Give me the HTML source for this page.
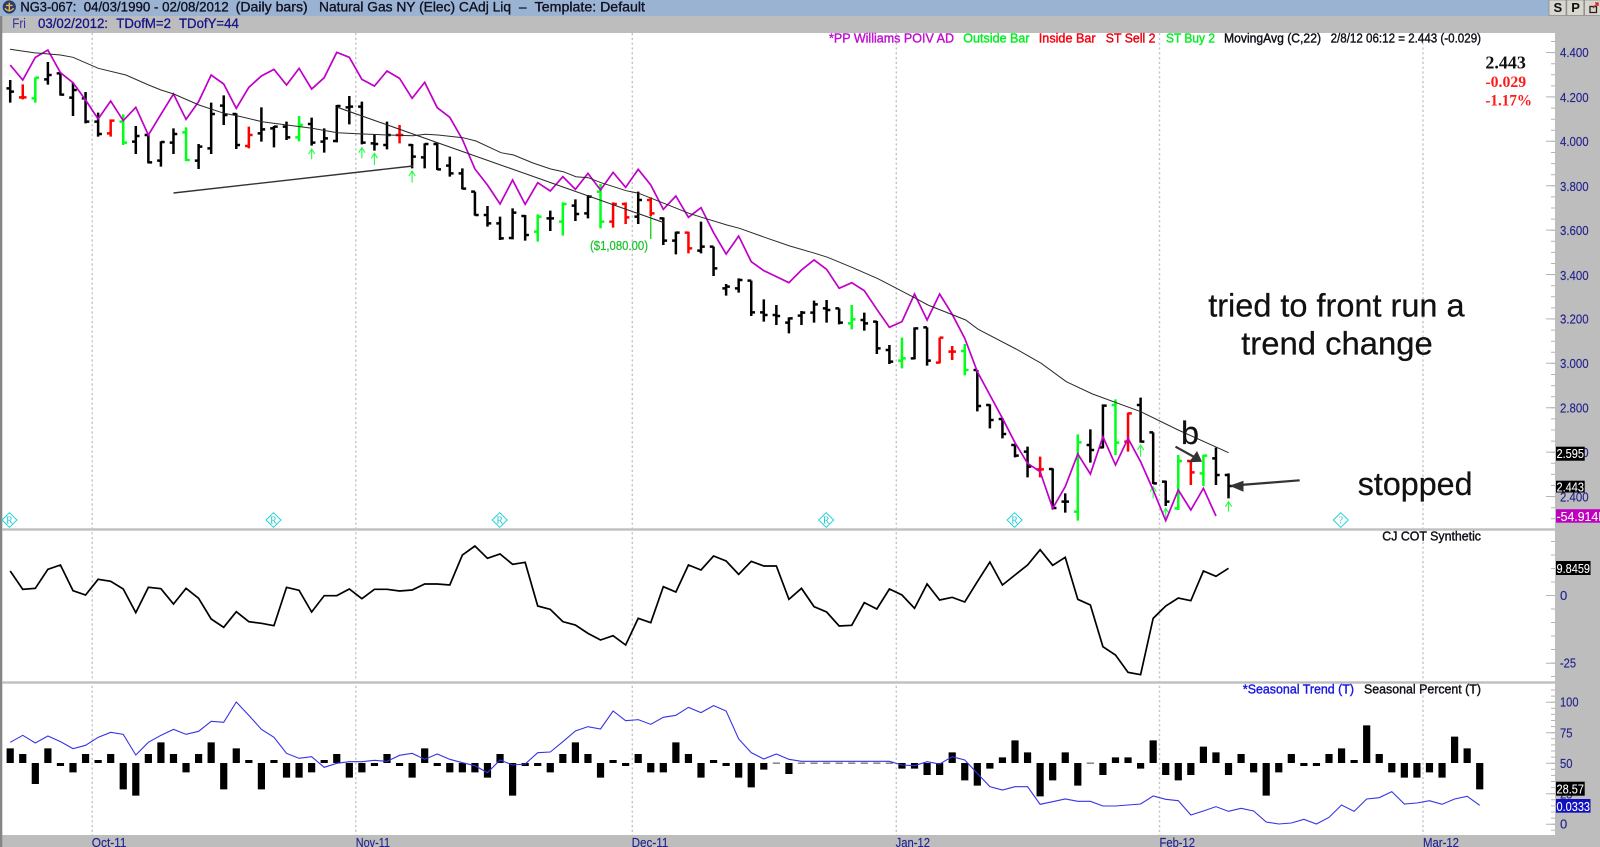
<!DOCTYPE html>
<html><head><meta charset="utf-8"><title>NG3-067</title>
<style>
html,body{margin:0;padding:0;background:#fff;width:1600px;height:847px;overflow:hidden}
svg{display:block;filter:blur(.25px)}
.n path,.n polyline{vector-effect:non-scaling-stroke;fill:none}
text{font-family:"Liberation Sans",Arial,sans-serif}
.t{font-size:14px;fill:#101020;stroke:#101020;stroke-width:.35}
.i{font-size:13.5px;fill:#14148c;stroke:#14148c;stroke-width:.3}
.a{font-size:13px;fill:#24248c;stroke:#24248c;stroke-width:.15}
.l{font-size:13px;stroke-width:.4}
.b{font-size:13px;fill:#fff;stroke:#fff;stroke-width:.1}
.p{font-family:"Liberation Serif",serif;font-weight:bold}
.c{font-size:32.3px;fill:#111;stroke:#111;stroke-width:.25}
</style></head><body>
<svg width="1600" height="847" viewBox="0 0 1600 847" xmlns="http://www.w3.org/2000/svg">
<rect width="1600" height="847" fill="#fff"/>
<rect x="0" y="0" width="1600" height="16" fill="#9ab3d2"/>
<rect x="0" y="16" width="1600" height="17" fill="#bdbdbd"/>
<rect x="1555" y="33" width="45" height="814" fill="#bdbdbd"/>
<rect x="0" y="835" width="1600" height="12" fill="#bdbdbd"/>
<rect x="0" y="16" width="2.3" height="831" fill="#858585"/>
<rect x="2" y="528.3" width="1553" height="2.4" fill="#bfbfbf"/>
<rect x="2" y="681.3" width="1553" height="2.4" fill="#bfbfbf"/>

<!-- dotted month lines -->
<g stroke="#c4c4c4" stroke-width="1.4" stroke-dasharray="2.2 2.6">
<path d="M92.2 33V835M355.8 33V835M632.3 33V835M896.3 33V835M1159.5 33V835M1423 33V835"/>
</g>

<!-- axis ticks -->
<g fill="none" stroke="#b4b4b4" stroke-width="1">
<path stroke-width="4" stroke-dasharray="1 10.1" d="M1553 41V528"/>
<path stroke-width="9" stroke-dasharray="1 43.4" d="M1550.5 52V528"/>
<path stroke-width="4" stroke-dasharray="1 12.5" d="M1553 541V681"/>
<path stroke-width="9" stroke-dasharray="1 66.7" d="M1550.5 595V681"/>
<path stroke-width="4" stroke-dasharray="1 5.1" d="M1553 689.5V835"/>
<path stroke-width="9" stroke-dasharray="1 29.5" d="M1550.5 701.7V835"/>
</g>

<!-- title bar -->
<circle cx="9.3" cy="7" r="6.6" fill="#2e3a68"/>
<path d="M9.3 2.6V11.8M6 5.4H12.6M5.2 8C5.8 11.4 12.8 11.4 13.4 8" fill="none" stroke="#e0bc50" stroke-width="1.4"/>
<text class="t" x="20.4" y="11.5" textLength="56" lengthAdjust="spacingAndGlyphs">NG3-067:</text>
<text class="t" x="83.7" y="11.5" textLength="145" lengthAdjust="spacingAndGlyphs">04/03/1990 - 02/08/2012</text>
<text class="t" x="235.7" y="11.5" textLength="72" lengthAdjust="spacingAndGlyphs">(Daily bars)</text>
<text class="t" x="319" y="11.5" textLength="192" lengthAdjust="spacingAndGlyphs">Natural Gas NY (Elec) CAdj Liq</text>
<text class="t" x="519" y="11.5" textLength="7.5" lengthAdjust="spacingAndGlyphs">—</text>
<text class="t" x="534.7" y="11.5" textLength="110.3" lengthAdjust="spacingAndGlyphs">Template: Default</text>

<!-- top right buttons -->
<g>
<rect x="1549" y="0" width="17" height="15.5" fill="#d9d6ce" stroke="#8f8f8f" stroke-width=".8"/>
<rect x="1566.8" y="0" width="17" height="15.5" fill="#d9d6ce" stroke="#8f8f8f" stroke-width=".8"/>
<rect x="1584.6" y="0" width="16" height="15.5" fill="#d9d6ce" stroke="#8f8f8f" stroke-width=".8"/>
<text x="1553.5" y="12" font-size="13" font-weight="bold" fill="#111">S</text>
<text x="1571.2" y="12" font-size="13" font-weight="bold" fill="#111">P</text>
<rect x="1590" y="6.5" width="6.5" height="6" fill="none" stroke="#222" stroke-width="1.3"/>
<path d="M1593 8L1597.5 3.5M1595 3H1598V6" fill="none" stroke="#d02020" stroke-width="1.3"/>
</g>

<!-- info row -->
<text class="i" x="12.2" y="28" textLength="13.7" lengthAdjust="spacingAndGlyphs" style="fill:#33339a;stroke:none">Fri</text>
<text class="i" x="38" y="28" textLength="70" lengthAdjust="spacingAndGlyphs">03/02/2012:</text>
<text class="i" x="116.3" y="28" textLength="54.7" lengthAdjust="spacingAndGlyphs">TDofM=2</text>
<text class="i" x="179" y="28" textLength="59.8" lengthAdjust="spacingAndGlyphs">TDofY=44</text>

<!-- price bars and main lines: x in bar index, y in 3x pixels -->
<g class="n" transform="translate(10.2 0) scale(12.56 .33333)">
<path stroke="#000" stroke-width="2.5" d="M0 240V308M0 265h-.3M0 275h.3M3 186V254M3 238h-.3M3 225h.3M4 218V287M4 220h-.3M4 284h.3M5 248V348M5 293h-.3M5 270h.3M6 276V370M6 295h-.3M6 365h.3M7 338V410M7 365h-.3M7 402h.3M10 378V462M10 425h-.3M10 408h.3M11 405V490M11 405h-.3M11 487h.3M12 424V500M12 482h-.3M12 426h.3M13 385V462M13 428h-.3M13 402h.3M15 432V507M15 482h-.3M15 440h.3M16 308V462M16 445h-.3M16 342h.3M17 286V375M17 317h-.3M17 345h.3M18 340V447M18 342h-.3M18 435h.3M20 322V425M20 400h-.3M20 388h.3M21 378V442M21 385h-.3M21 380h.3M22 365V420M22 380h-.3M22 412h.3M24 353V437M24 372h-.3M24 428h.3M25 385V458M25 425h-.3M25 415h.3M26 315V427M26 423h-.3M26 318h.3M27 288V373M27 322h-.3M27 320h.3M28 305V433M28 320h-.3M28 428h.3M29 402V452M29 430h-.3M29 432h.3M30 365V448M30 435h-.3M30 405h.3M32 432V505M32 435h-.3M32 470h.3M33 430V505M33 472h-.3M33 432h.3M34 430V510M34 432h-.3M34 508h.3M35 470V530M35 497h-.3M35 520h.3M36 505V568M36 520h-.3M36 566h.3M37 575V647M37 575h-.3M37 645h.3M38 618V680M38 645h-.3M38 670h.3M39 650V720M39 670h-.3M39 715h.3M40 625V718M40 714h-.3M40 638h.3M41 645V722M41 648h-.3M41 705h.3M43 632V693M43 655h-.3M43 655h.3M45 598V663M45 617h-.3M45 642h.3M46 585V655M46 640h-.3M46 590h.3M50 575V672M50 650h-.3M50 600h.3M52 652V735M52 655h-.3M52 722h.3M53 695V763M53 722h-.3M53 698h.3M55 665V760M55 752h-.3M55 740h.3M56 740V828M56 740h-.3M56 805h.3M57 852V887M57 865h-.3M57 860h.3M58 835V878M58 865h-.3M58 840h.3M59 842V948M59 842h-.3M59 937h.3M60 898V965M60 937h-.3M60 945h.3M61 915V975M61 945h-.3M61 948h.3M62 952V1000M62 968h-.3M62 955h.3M63 933V975M63 947h-.3M63 938h.3M64 902V968M64 938h-.3M64 913h.3M65 900V968M65 925h-.3M65 930h.3M66 925V973M66 925h-.3M66 968h.3M68 938V992M68 960h-.3M68 970h.3M69 963V1062M69 965h-.3M69 1045h.3M70 1035V1092M70 1050h-.3M70 1085h.3M72 982V1078M72 1075h-.3M72 985h.3M73 982V1097M73 982h-.3M73 1082h.3M77 1110V1234M77 1110h-.3M77 1218h.3M78 1213V1285M78 1215h-.3M78 1260h.3M79 1255V1315M79 1257h-.3M79 1302h.3M80 1335V1372M80 1335h-.3M80 1367h.3M81 1340V1432M81 1355h-.3M81 1400h.3M83 1405V1528M83 1407h-.3M83 1524h.3M84 1480V1538M84 1505h-.3M84 1505h.3M86 1288V1388M86 1335h-.3M86 1350h.3M87 1213V1345M87 1342h-.3M87 1217h.3M90 1193V1328M90 1215h-.3M90 1325h.3M91 1297V1452M91 1297h-.3M91 1450h.3M92 1442V1518M92 1445h-.3M92 1505h.3M96 1343V1455M96 1375h-.3M96 1425h.3M97 1420V1495M97 1425h-.3M97 1458h.3"/>
<path stroke="#00ff1a" stroke-width="2.5" d="M2 232V308M2 295h-.3M2 233h.3M9 343V435M9 365h-.3M9 428h.3M14 382V483M14 397h-.3M14 480h.3M23 348V424M23 412h-.3M23 375h.3M42 643V725M42 695h-.3M42 650h.3M44 607V707M44 665h-.3M44 612h.3M47 552V685M47 575h-.3M47 665h.3M67 915V988M67 970h-.3M67 958h.3M71 1013V1105M71 1082h-.3M71 1075h.3M76 1032V1126M76 1053h-.3M76 1110h.3M85 1303V1562M85 1535h-.3M85 1327h.3M88 1198V1365M88 1215h-.3M88 1328h.3M93 1365V1530M93 1525h-.3M93 1383h.3M95 1365V1458M95 1420h-.3M95 1367h.3"/>
<path stroke="#ff0000" stroke-width="2.5" d="M1 253V298M1 292h-.3M1 292h.3M8 358V410M8 400h-.3M8 362h.3M19 380V445M19 438h-.3M19 405h.3M31 375V430M31 405h-.3M31 405h.3M48 607V683M48 665h-.3M48 612h.3M49 607V672M49 612h-.3M49 652h.3M51 592V648M51 600h-.3M51 640h.3M54 695V760M54 698h-.3M54 745h.3M74 1013V1090M74 1088h-.3M74 1013h.3M75 1038V1080M75 1055h-.3M75 1055h.3M82 1370V1432M82 1408h-.3M82 1408h.3M89 1238V1355M89 1325h-.3M89 1240h.3M94 1383V1455M94 1383h-.3M94 1417h.3"/>
<path stroke="#10d010" stroke-width="1.3" d="M51 648V717"/>
<path stroke="#20ff40" stroke-width="1.1" d="M24 478V447M23.75 462L24 447L24.25 462M28 475V443M27.75 458L28 443L28.25 458M29 495V460M28.75 475L29 460L29.25 475M32 548V513M31.75 528L32 513L32.25 528M90 1370V1335M89.75 1350L90 1335L90.25 1350M91 1495V1460M90.75 1475L91 1460L91.25 1475M92 1555V1525M91.75 1540L92 1525L92.25 1540M97 1535V1505M96.75 1520L97 1505L97.25 1520"/>
<polyline stroke="#c000c8" stroke-width="1.7" points="0,195 1,240 2,172 3,150 4,218 5,248 6,300 7,357 8,303 9,362 10,322 11,405 12,343 13,282 14,358 15,305 16,225 17,252 18,325 19,262 20,228 21,208 22,255 23,205 24,267 25,233 26,157 27,172 28,238 29,258 30,213 31,235 32,295 33,247 34,323 35,352 36,418 37,507 38,555 39,612 40,540 41,613 42,548 43,573 44,530 45,568 46,520 47,570 48,517 49,562 50,508 51,555 52,628 53,588 54,652 55,623 56,698 57,762 58,708 59,785 60,812 61,830 62,848 63,810 64,780 65,808 66,865 67,848 68,872 69,928 70,982 71,965 72,882 73,960 74,882 75,943 76,1015 77,1115 78,1185 79,1255 80,1328 81,1390 82,1415 83,1525 84,1460 85,1362 86,1422 87,1310 88,1395 89,1315 90,1385 91,1470 92,1562 93,1470 94,1530 95,1465 96,1548"/>
</g>

<!-- moving average and hand-drawn trendlines -->
<polyline fill="none" stroke="#2a2a2a" stroke-width="1" points="10,49.3 34,52.7 60.5,55 73,57.3 98.3,68.3 125.9,75 148.6,85 161,90 173.8,94 199,105 224,113.3 238,116 262,121.7 287,125 312,128.3 337.4,132.7 362.6,134 387.8,135 413,135.7 425.5,134.3 438,135 463,137.7 476,141 501,152.7 513.6,155 533,163 550.7,169 563.3,171.7 575.9,176.7 588.4,177.7 601,182.7 626.2,190.7 638.8,193.3 664,203.3 689,213.3 701.7,217.3 726.9,225 739.5,228.3 764.6,237.3 789.8,246 815,253.3 827.6,257.3 852.7,267.7 877.9,278.7 915.7,298.3 927.9,305 965.7,320 978.2,329.3 1016,349 1041.2,363.3 1066.3,381.7 1092.5,394 1140.8,411.7 1178.2,430 1228.6,452.7"/>
<path fill="none" stroke="#2a2a2a" stroke-width="1.1" d="M337.4 107.3L664 222.7"/>
<path fill="none" stroke="#333" stroke-width="1.4" d="M173.5 193L413 166"/>

<!-- annotation arrows -->
<g fill="#333">
<path d="M1175.5 446.7L1196 458" stroke="#333" stroke-width="2.2" fill="none"/>
<polygon points="1202,461.7 1189,462.3 1197,451"/>
<path d="M1299.7 480.3L1240 485" stroke="#333" stroke-width="2.2" fill="none"/>
<polygon points="1229.3,485.7 1243.5,480.7 1243.5,491.7"/>
</g>

<!-- legend main -->
<g class="l">
<text x="829" y="42.7" textLength="125" lengthAdjust="spacingAndGlyphs" fill="#c010d0" stroke="#c010d0">*PP Williams POIV AD</text>
<text x="963.3" y="42.7" textLength="66.3" lengthAdjust="spacingAndGlyphs" fill="#00f020" stroke="#00f020">Outside Bar</text>
<text x="1038.8" y="42.7" textLength="56.8" lengthAdjust="spacingAndGlyphs" fill="#f80010" stroke="#f80010">Inside Bar</text>
<text x="1105.8" y="42.7" textLength="49.7" lengthAdjust="spacingAndGlyphs" fill="#e80010" stroke="#e80010">ST Sell 2</text>
<text x="1166" y="42.7" textLength="49" lengthAdjust="spacingAndGlyphs" fill="#00f020" stroke="#00f020">ST Buy 2</text>
<text x="1224" y="42.7" textLength="97" lengthAdjust="spacingAndGlyphs" fill="#101018" stroke="#101018">MovingAvg (C,22)</text>
<text x="1330.6" y="42.7" textLength="150.4" lengthAdjust="spacingAndGlyphs" fill="#101018" stroke="#101018">2/8/12 06:12 = 2.443 (-0.029)</text>
<text x="1382.3" y="540.7" textLength="98.7" lengthAdjust="spacingAndGlyphs" fill="#101018" stroke="#101018">CJ COT Synthetic</text>
<text x="1242.9" y="693.3" textLength="111.1" lengthAdjust="spacingAndGlyphs" fill="#1818e0" stroke="#1818e0">*Seasonal Trend (T)</text>
<text x="1364" y="693.3" textLength="117" lengthAdjust="spacingAndGlyphs" fill="#101018" stroke="#101018">Seasonal Percent (T)</text>
</g>

<!-- last value box -->
<text class="p" x="1485.4" y="68.5" font-size="18" fill="#111" textLength="40.5" lengthAdjust="spacingAndGlyphs">2.443</text>
<text class="p" x="1485.4" y="87" font-size="16" fill="#ff1a1a" textLength="40.8" lengthAdjust="spacingAndGlyphs">-0.029</text>
<text class="p" x="1485.4" y="105.3" font-size="16" fill="#ff1a1a" textLength="46.6" lengthAdjust="spacingAndGlyphs">-1.17%</text>

<!-- comments -->
<text class="c" x="1208.2" y="316.7" textLength="256.4" lengthAdjust="spacingAndGlyphs">tried to front run a</text>
<text class="c" x="1241.2" y="354.3" textLength="191.6" lengthAdjust="spacingAndGlyphs">trend change</text>
<text class="c" x="1357.8" y="495" textLength="114.7" lengthAdjust="spacingAndGlyphs">stopped</text>
<text class="c" x="1181" y="444">b</text>

<text x="590" y="250" font-size="12.5" fill="#20c030" stroke="#20c030" stroke-width=".25" textLength="58" lengthAdjust="spacingAndGlyphs">($1,080.00)</text>

<!-- diamonds -->
<g fill="none" stroke="#22d4d8" stroke-width="1">
<path d="M2 520L9.5 512.7L17 520L9.5 527.3Z"/>
<path d="M266 520L273.5 512.7L281 520L273.5 527.3Z"/>
<path d="M492.2 520L499.7 512.7L507.2 520L499.7 527.3Z"/>
<path d="M818.7 520L826.2 512.7L833.7 520L826.2 527.3Z"/>
<path d="M1007.1 520L1014.6 512.7L1022.1 520L1014.6 527.3Z"/>
<path d="M1333.3 520L1340.8 512.7L1348.3 520L1340.8 527.3Z"/>
</g>
<g font-size="10" fill="#22c8cc" text-anchor="middle">
<text x="9.5" y="523.5" style="font-family:'Liberation Serif',serif">R</text>
<text x="273.5" y="523.5" style="font-family:'Liberation Serif',serif">R</text>
<text x="499.7" y="523.5" style="font-family:'Liberation Serif',serif">R</text>
<text x="826.2" y="523.5" style="font-family:'Liberation Serif',serif">R</text>
<text x="1014.6" y="523.5" style="font-family:'Liberation Serif',serif">R</text>
<text x="1340.8" y="523.5" style="font-family:'Liberation Serif',serif">?</text>
</g>

<!-- panel 2 line: y=500+zy/3 -->
<g class="n" transform="translate(10.2 500) scale(12.56 .33333)">
<polyline stroke="#000" stroke-width="1.7" points="0,213 1,268 2,265 3,208 4,195 5,272 6,285 7,238 8,244 9,267 10,338 11,262 12,266 13,312 14,265 15,295 16,357 17,382 18,335 19,365 20,370 21,377 22,262 23,271 24,336 25,287 26,287 27,267 28,296 29,268 30,268 31,273 32,270 33,252 34,252 35,255 36,165 37,138 38,175 39,162 40,193 41,187 42,318 43,328 44,365 45,375 46,400 47,420 48,407 49,435 50,355 51,368 52,260 53,276 54,195 55,210 56,168 57,183 58,223 59,184 60,198 61,198 62,298 63,265 64,320 65,336 66,378 67,376 68,308 69,327 70,267 71,285 72,325 73,252 74,300 75,292 76,306 77,245 78,186 79,255 80,225 81,195 82,149 83,196 84,172 85,298 86,315 87,440 88,465 89,517 90,524 91,355 92,318 93,294 94,302 95,213 96,229 97,205"/>
</g>

<!-- panel 3 histogram and seasonal line -->
<g class="n" transform="translate(10.2 500) scale(12.56 .33333)">
<path stroke="#000" stroke-width="7.2" d="M0 789V745M1 789V762M2 789V852M3 789V745M4 789V798M5 789V817M6 789V762M7 789V780M8 789V762M9 789V868M10 789V887M11 789V762M12 789V727M13 789V762M14 789V817M15 789V762M16 789V727M17 789V868M18 789V745M19 789V780M20 789V868M21 789V780M22 789V833M23 789V833M24 789V817M25 789V780M26 789V762M27 789V833M28 789V817M29 789V798M30 789V762M31 789V798M32 789V833M33 789V745M34 789V798M35 789V817M36 789V817M37 789V817M38 789V833M39 789V762M40 789V887M41 789V798M42 789V798M43 789V817M44 789V762M45 789V727M46 789V762M47 789V833M48 789V780M49 789V798M50 789V762M51 789V817M52 789V817M53 789V727M54 789V762M55 789V833M56 789V780M57 789V798M58 789V833M59 789V862M60 789V809M62 789V822M71 789V806M72 789V806M73 789V825M74 789V825M75 789V757M76 789V841M77 789V857M78 789V806M79 789V772M80 789V721M81 789V757M82 789V889M83 789V841M84 789V757M85 789V857M87 789V825M88 789V772M89 789V772M90 789V806M91 789V721M92 789V825M93 789V841M94 789V825M95 789V740M96 789V757M97 789V825M98 789V762M99 789V817M100 789V887M101 789V817M102 789V762M103 789V798M104 789V798M105 789V762M106 789V745M107 789V780M108 789V676M109 789V762M110 789V817M111 789V833M112 789V833M113 789V817M114 789V833M115 789V710M116 789V745M117 789V868"/>
<path stroke="#444" stroke-width="7.2" d="M61 788V791M63 788V791M64 788V791M65 788V791M66 788V791M67 788V791M68 788V791M69 788V791M70 788V791M86 788V791"/>
<polyline stroke="#3434e4" stroke-width="1.1" points="0,727 1,706 2,729 3,708 4,725 5,746 6,736 7,712 8,697 9,703 10,765 11,727 12,706 13,688 14,703 15,694 16,664 17,667 18,606 19,646 20,688 21,712 22,760 23,775 24,770 25,802 26,790 27,785 28,785 29,781 30,784 31,766 32,760 33,778 34,762 35,778 36,788 37,797 38,818 39,780 40,795 41,792 42,758 43,756 44,725 45,693 46,680 47,687 48,633 49,662 50,659 51,673 52,652 53,646 54,622 55,638 56,617 57,633 58,717 59,758 60,777 61,762 62,778 63,784 64,784 65,784 66,784 67,784 68,784 69,784 70,784 71,795 72,797 73,785 74,792 75,770 76,780 77,820 78,860 79,870 80,860 81,860 82,913 83,905 84,897 85,904 86,904 87,918 88,918 89,915 90,912 91,888 92,898 93,902 94,945 95,933 96,920 97,934 98,925 99,933 100,966 101,972 102,969 103,958 104,972 105,952 106,915 107,934 108,897 109,893 110,875 111,912 112,909 113,902 114,913 115,897 116,889 117,916"/>
</g>

<!-- right axis labels -->
<g class="a">
<text x="1560" y="57" textLength="28.6" lengthAdjust="spacingAndGlyphs">4.400</text>
<text x="1560" y="102" textLength="28.6" lengthAdjust="spacingAndGlyphs">4.200</text>
<text x="1560" y="146" textLength="28.6" lengthAdjust="spacingAndGlyphs">4.000</text>
<text x="1560" y="191" textLength="28.6" lengthAdjust="spacingAndGlyphs">3.800</text>
<text x="1560" y="235" textLength="28.6" lengthAdjust="spacingAndGlyphs">3.600</text>
<text x="1560" y="280" textLength="28.6" lengthAdjust="spacingAndGlyphs">3.400</text>
<text x="1560" y="323.7" textLength="28.6" lengthAdjust="spacingAndGlyphs">3.200</text>
<text x="1560" y="368" textLength="28.6" lengthAdjust="spacingAndGlyphs">3.000</text>
<text x="1560" y="412.7" textLength="28.6" lengthAdjust="spacingAndGlyphs">2.800</text>
<text x="1560" y="457" textLength="28.6" lengthAdjust="spacingAndGlyphs">2.600</text>
<text x="1560" y="501.7" textLength="28.6" lengthAdjust="spacingAndGlyphs">2.400</text>
<text x="1560" y="600">0</text>
<text x="1560" y="667.7" textLength="16" lengthAdjust="spacingAndGlyphs">-25</text>
<text x="1560" y="706.7" textLength="18.5" lengthAdjust="spacingAndGlyphs">100</text>
<text x="1560" y="737.7" textLength="12.5" lengthAdjust="spacingAndGlyphs">75</text>
<text x="1560" y="768" textLength="12.5" lengthAdjust="spacingAndGlyphs">50</text>
<text x="1560" y="798.3" textLength="12.5" lengthAdjust="spacingAndGlyphs">25</text>
<text x="1560" y="828.7">0</text>
<text x="91.8" y="847" textLength="34.7" lengthAdjust="spacingAndGlyphs">Oct-11</text>
<text x="355.8" y="847" textLength="34.2" lengthAdjust="spacingAndGlyphs">Nov-11</text>
<text x="631.6" y="847" textLength="36.8" lengthAdjust="spacingAndGlyphs">Dec-11</text>
<text x="895.6" y="847" textLength="34.4" lengthAdjust="spacingAndGlyphs">Jan-12</text>
<text x="1159.5" y="847" textLength="35.5" lengthAdjust="spacingAndGlyphs">Feb-12</text>
<text x="1423" y="847" textLength="36" lengthAdjust="spacingAndGlyphs">Mar-12</text>
</g>

<!-- value boxes -->
<rect x="1556" y="446.7" width="28.7" height="14" fill="#000"/>
<text class="b" x="1556.5" y="458" textLength="27.5" lengthAdjust="spacingAndGlyphs">2.595</text>
<rect x="1556" y="480.7" width="28.7" height="11.8" fill="#000"/>
<text class="b" x="1556.5" y="491.5" textLength="27.5" lengthAdjust="spacingAndGlyphs">2.443</text>
<rect x="1556" y="509.2" width="44" height="13.5" fill="#c000c0"/>
<text class="b" x="1556.5" y="520.8" textLength="52" lengthAdjust="spacingAndGlyphs">-54.914M</text>
<rect x="1556" y="561" width="34.5" height="14" fill="#000"/>
<text class="b" x="1556.5" y="573" textLength="33.5" lengthAdjust="spacingAndGlyphs">9.8459</text>
<rect x="1556" y="781.7" width="28.7" height="14" fill="#000"/>
<text class="b" x="1556.5" y="793.5" textLength="27.5" lengthAdjust="spacingAndGlyphs">28.57</text>
<rect x="1556" y="799" width="34.5" height="13.7" fill="#1010c0"/>
<text class="b" x="1556.5" y="810.8" textLength="33.5" lengthAdjust="spacingAndGlyphs">0.0333</text>
</svg>
</body></html>
